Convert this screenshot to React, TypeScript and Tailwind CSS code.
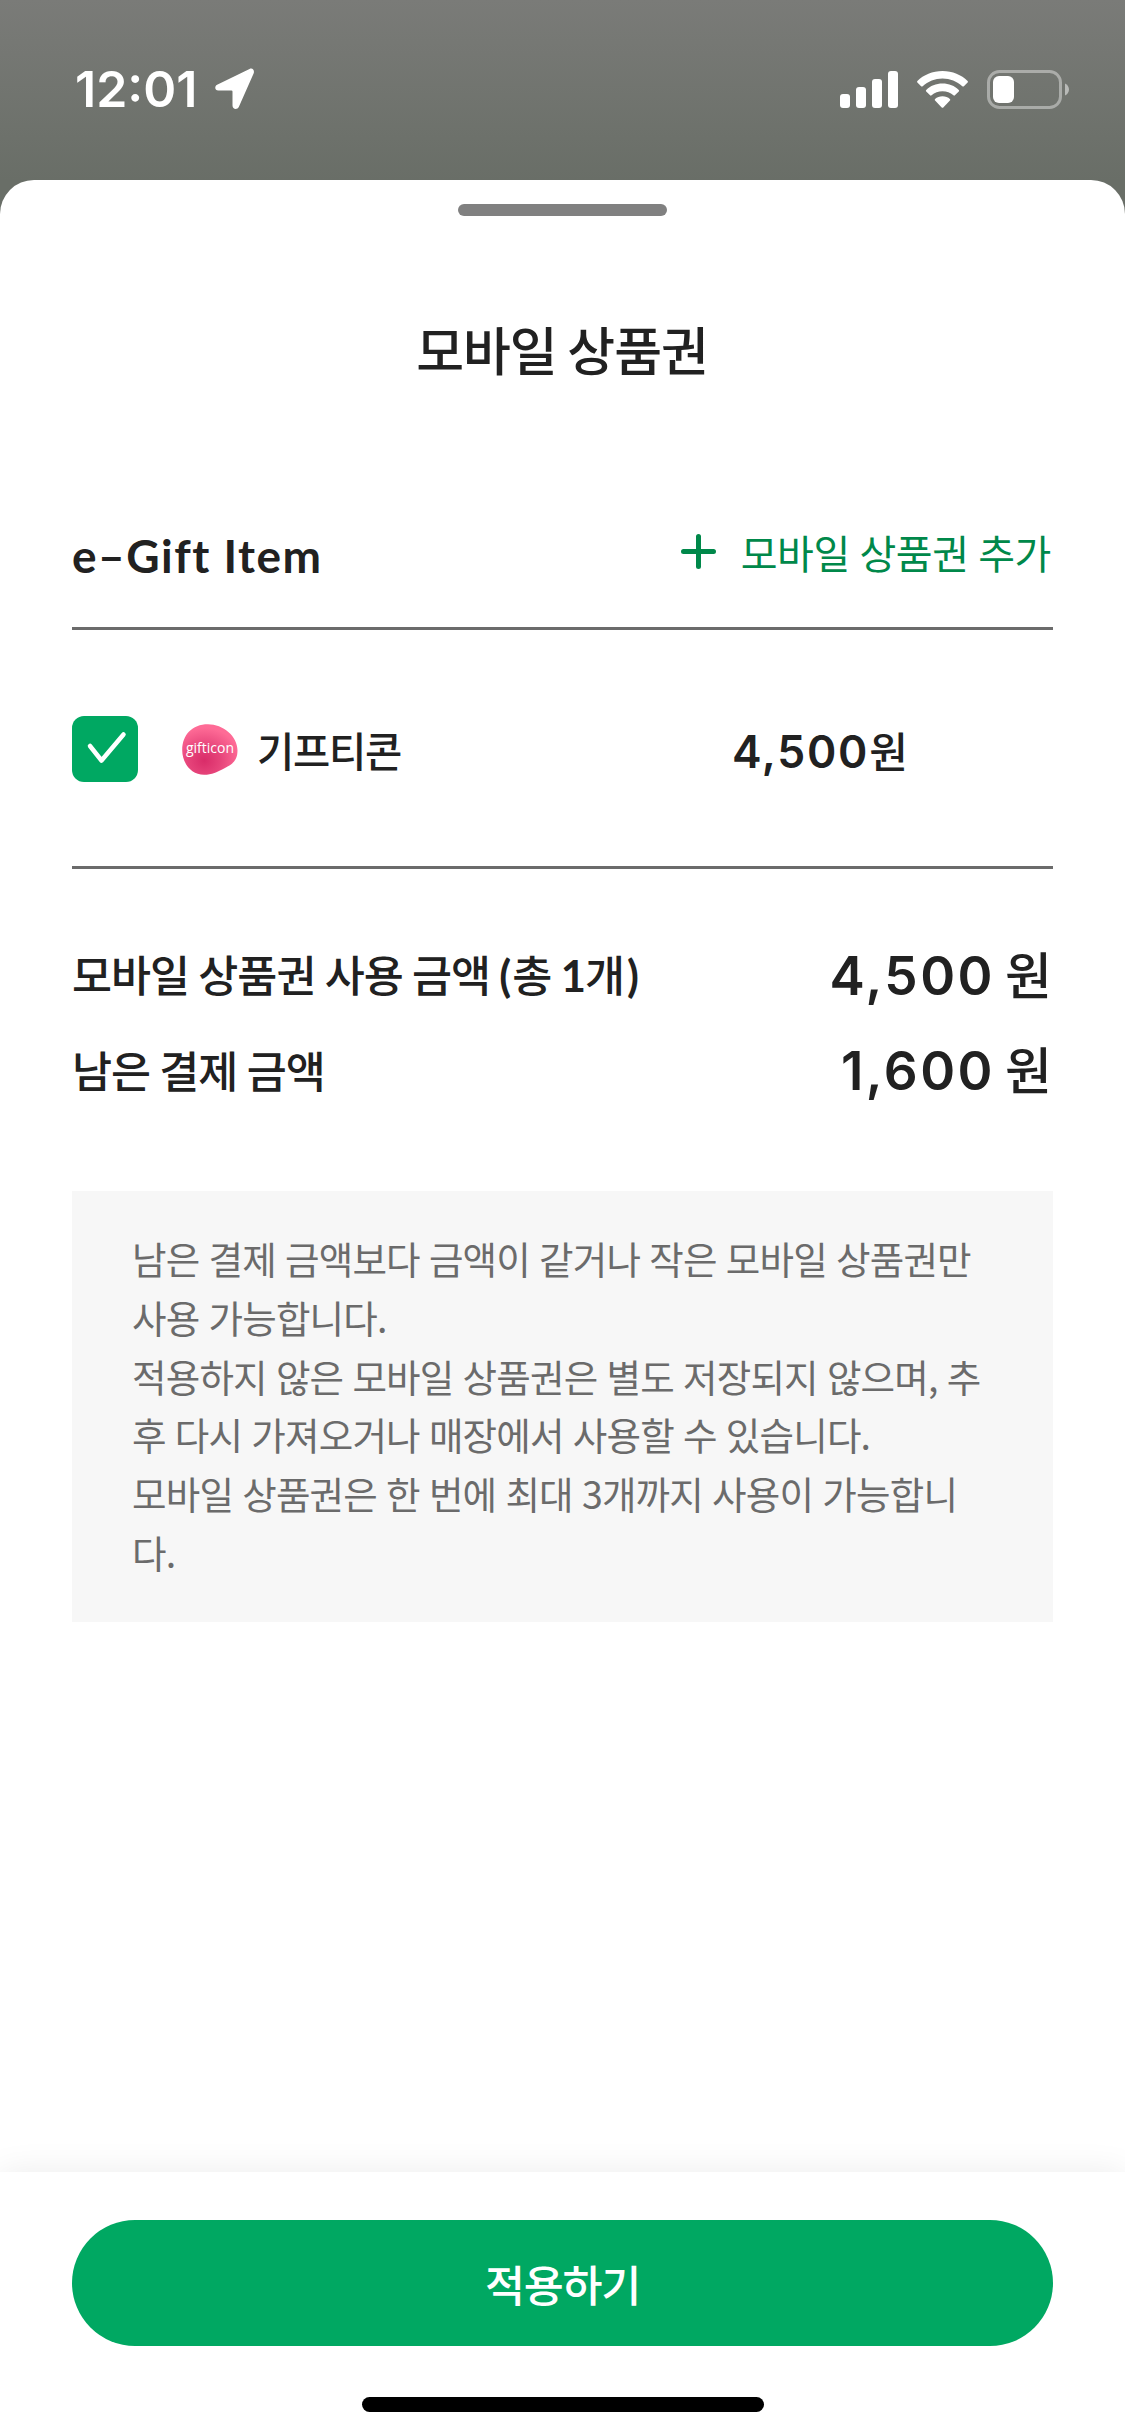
import React, { useState } from 'react';

interface GiftItem {
  id: string;
  name: string;
  amount: number;
}

const giftItems: GiftItem[] = [{ id: 'gifticon', name: '기프티콘', amount: 4500 }];

const notices = [
  '남은 결제 금액보다 금액이 같거나 작은 모바일 상품권만 사용 가능합니다.',
  '적용하지 않은 모바일 상품권은 별도 저장되지 않으며, 추후 다시 가져오거나 매장에서 사용할 수 있습니다.',
  '모바일 상품권은 한 번에 최대 3개까지 사용이 가능합니다.'
];

const formatAmount = (value: number): string => value.toLocaleString('en-US');

const StatusBar: React.FC = () => (
  <div className="flex h-[180px] items-start justify-between pl-[75px] pr-[56px] pt-[59px] text-white">
    <div className="flex h-[60px] items-center">
      <span className="w-[140px] whitespace-nowrap font-['Inter',sans-serif] text-[50px] font-semibold leading-[60px]">
        12:01
      </span>
      <svg width="40" height="42" viewBox="0 0 40 42" fill="currentColor">
        <path d="M34.500.9 2.100 16.800C-.8 18.500-.2 22.500 3.300 22.500H16.400Q17.500 22.500 17.500 23.600V37.500C17.500 41.500 22.300 42.200 23.900 38.700L38.600 5.600C39.800 2.500 37.800-.6 34.500.9Z" />
      </svg>
    </div>
    <div className="flex h-[60px] items-center">
      <svg width="58" height="37" viewBox="0 0 58 37" fill="currentColor">
        <rect x="0" y="23" width="10" height="14" rx="3" />
        <rect x="16" y="16" width="10" height="21" rx="3" />
        <rect x="32" y="8" width="10" height="29" rx="3" />
        <rect x="48" y="0" width="10" height="37" rx="3" />
      </svg>
      <svg className="ml-[19px]" width="51" height="37" viewBox="0 0 51 37" fill="currentColor">
        <path d="M25.500 0C35.500 0 44.500 4 50.600 9.900Q51.300 10.700 50.600 11.500L46.900 15.200Q46.100 15.900 45.300 15.200C40 10.500 33 7.600 25.500 7.600S11 10.500 5.700 15.200Q4.900 15.900 4.100 15.200L.4 11.500Q-.3 10.700.4 9.900C6.500 4 15.500 0 25.500 0Z" />
        <path d="M25.500 12.600C31.900 12.600 37.700 15 41.800 18.900Q42.500 19.700 41.800 20.500L37.900 24.300Q37.200 25 36.400 24.300C33.400 21.700 29.700 20.200 25.500 20.200S17.600 21.700 14.600 24.300Q13.800 25 13.100 24.300L9.200 20.500Q8.500 19.700 9.200 18.900C13.300 15 19.100 12.600 25.500 12.600Z" />
        <path d="M25.500 25.300C28.400 25.300 31 26.400 32.900 28Q33.600 28.800 32.900 29.600L26.300 36.400Q25.500 37.100 24.700 36.400L18.100 29.600Q17.400 28.800 18.100 28C20 26.400 22.600 25.300 25.500 25.300Z" />
      </svg>
      <svg className="ml-[19px]" width="82" height="39" viewBox="0 0 82 39">
        <rect x="1.500" y="1.500" width="72" height="36" rx="11" fill="none" stroke="white" strokeOpacity="0.4" strokeWidth="3" />
        <rect x="6" y="6" width="21" height="27" rx="6" fill="white" />
        <path d="M78 13.500C80.500 14.500 82 17 82 19.500S80.500 24.500 78 25.500Z" fill="white" fillOpacity="0.5" />
      </svg>
    </div>
  </div>
);

const GifticonLogo: React.FC = () => (
  <svg width="60" height="51" viewBox="0 0 60 51">
    <defs>
      <radialGradient id="gifticon-pink" cx="0.4" cy="0.72" r="0.65">
        <stop offset="0" stopColor="#d92c69" />
        <stop offset="0.45" stopColor="#e6447a" />
        <stop offset="1" stopColor="#fe6b96" />
      </radialGradient>
    </defs>
    <path
      d="M26 .2C41 .2 55.500 12 55.500 26.500C55.500 36 51 40 43 44C35 48 30 50.800 22 50.800C9 50.800.2 39 .2 26C.2 11 10 .2 26 .2Z"
      fill="url(#gifticon-pink)"
    />
    <text x="28" y="29" textAnchor="middle" textLength="48" fill="white" className="font-['Open_Sans',sans-serif] text-[14px]">
      gifticon
    </text>
  </svg>
);

interface SummaryRowProps {
  label: React.ReactNode;
  amount: number;
}

const SummaryRow: React.FC<SummaryRowProps> = ({ label, amount }) => (
  <div className="flex h-[95px] items-center justify-between">
    <span className="text-[43.500px] font-medium tracking-[-1px] [word-spacing:0.500px]">{label}</span>
    <span className="flex items-baseline pt-[2px] text-[51px] font-medium">
      <span className="font-['Inter',sans-serif] text-[53px] font-semibold tracking-[2.500px]">
        {formatAmount(amount)}
      </span>
      <span className="ml-[10px] mr-[1px]">원</span>
    </span>
  </div>
);

export default function App() {
  const [selected, setSelected] = useState<string[]>(['gifticon']);

  const toggleItem = (id: string) => {
    setSelected(prev => (prev.includes(id) ? prev.filter(item => item !== id) : [...prev, id]));
  };

  const usedAmount = giftItems
    .filter(item => selected.includes(item.id))
    .reduce((sum, item) => sum + item.amount, 0);

  return (
    <div className="flex h-[2436px] w-[1125px] flex-col overflow-hidden bg-[linear-gradient(#7a7b78_0px,#696e67_180px)] font-['Noto_Sans_CJK_KR',sans-serif] text-[#212121]">
      <StatusBar />

      <div className="flex flex-1 flex-col overflow-hidden rounded-t-[34px] bg-white">
        <div className="mx-auto mt-6 h-3 w-[209px] shrink-0 rounded-full bg-[#808080]" />

        <h1 className="mt-[93px] h-[81px] pr-[1px] text-center text-[52px] font-medium leading-[80px] tracking-[-1px]">
          모바일 상품권
        </h1>

        <main className="flex-1 px-[72px]">
          <div className="mt-[100px] flex h-[140px] items-center justify-between border-b-[3px] border-[#6b6b6b] pb-[7px]">
            <h2 className="font-['Lato',sans-serif] text-[46px] font-bold tracking-[1.500px]">e–Gift Item</h2>
            <button className="mb-[7px] mr-[2px] flex items-center text-[40px] tracking-[-0.400px] text-[#00884a] [word-spacing:1px]">
              <svg className="mr-[25px]" width="35" height="35" viewBox="0 0 35 35" stroke="currentColor" strokeWidth="5" strokeLinecap="round">
                <path d="M17.500 2.500v30M2.500 17.500h30" />
              </svg>
              모바일 상품권 추가
            </button>
          </div>

          <ul className="border-b-[3px] border-[#6b6b6b]">
            {giftItems.map(item => (
              <li key={item.id} className="flex h-[236px] items-center pt-[2px]">
                <button
                  onClick={() => toggleItem(item.id)}
                  className="flex size-[66px] items-center justify-center rounded-[12px] bg-[#00a862]"
                >
                  {selected.includes(item.id) && (
                    <svg width="66" height="66" viewBox="0 0 66 66" fill="none" stroke="white" strokeWidth="4.500" strokeLinecap="round" strokeLinejoin="round">
                      <path d="M18 30 29.500 44.500 51.500 18.500" />
                    </svg>
                  )}
                </button>
                <span className="ml-11">
                  <GifticonLogo />
                </span>
                <span className="ml-[15px] w-[475px] pt-[2px] text-[40.500px] font-medium tracking-[-1.300px]">{item.name}</span>
                <span className="flex items-baseline pt-[5px] text-[42px] font-medium">
                  <span className="font-['Inter',sans-serif] text-[44.500px] font-semibold tracking-[1.700px]">
                    {formatAmount(item.amount)}
                  </span>
                  원
                </span>
              </li>
            ))}
          </ul>

          <div className="mt-[-2px] pt-[60px]">
            <SummaryRow
              label={
                <>
                  모바일 상품권 사용 금액 <b className="font-['Lato',sans-serif] tracking-[1px]">(</b>총{' '}
                  <b className="font-['Lato',sans-serif]">{selected.length}</b>개
                  <b className="ml-[3px] font-['Lato',sans-serif]">)</b>
                </>
              }
              amount={usedAmount}
            />
            <SummaryRow label="남은 결제 금액" amount={6100 - usedAmount} />
          </div>

          <div className="mt-[74px] h-[431px] break-all bg-[#f7f7f7] px-[60px] pt-[38px] text-[37.500px] leading-[58.800px] tracking-[-0.800px] text-[#6b6b6b] [word-spacing:1.500px]">
            {notices.map(notice => (
              <p key={notice}>{notice}</p>
            ))}
          </div>
        </main>

        <footer className="h-[264px] bg-white px-[72px] pt-12 shadow-[0_0_32px_rgba(0,0,0,0.08)]">
          <button className="h-[126px] w-full rounded-full bg-[#00a862] pt-[2px] text-[43.500px] font-medium tracking-[-1.300px] text-white">
            적용하기
          </button>
          <div className="mx-auto mt-[51px] h-[15px] w-[402px] rounded-full bg-black" />
        </footer>
      </div>
    </div>
  );
}
